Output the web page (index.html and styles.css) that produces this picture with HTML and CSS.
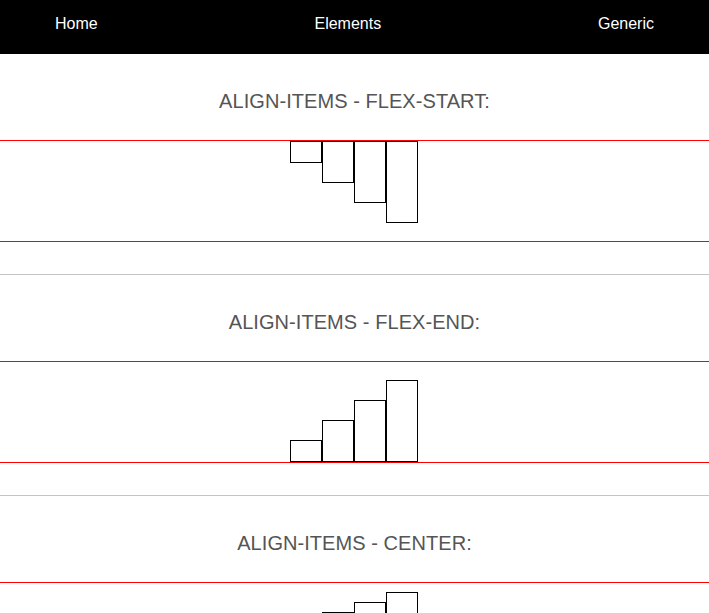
FILE: index.html
```html
<!DOCTYPE html>
<html>
<head>
<meta charset="utf-8">
<link rel="stylesheet" href="styles.css">
</head>
<body>
<nav class="nav">
  <a class="nav-link" href="#">Home</a>
  <a class="nav-link" href="#">Elements</a>
  <a class="nav-link" href="#">Generic</a>
</nav>
<section class="demo">
  <h2 class="demo-title">ALIGN-ITEMS - FLEX-START:</h2>
  <div class="flex flex-start">
    <div class="box h20"></div><div class="box h40"></div><div class="box h60"></div><div class="box h80"></div>
  </div>
</section>
<hr class="sep">
<section class="demo">
  <h2 class="demo-title">ALIGN-ITEMS - FLEX-END:</h2>
  <div class="flex flex-end">
    <div class="box h20"></div><div class="box h40"></div><div class="box h60"></div><div class="box h80"></div>
  </div>
</section>
<hr class="sep">
<section class="demo">
  <h2 class="demo-title">ALIGN-ITEMS - CENTER:</h2>
  <div class="flex flex-center">
    <div class="box h20"></div><div class="box h40"></div><div class="box h60"></div><div class="box h80"></div>
  </div>
</section>
<hr class="sep">
</body>
</html>
```
FILE: styles.css
```css
html, body {
  margin: 0;
  padding: 0;
  background: #fff;
  font-family: "Liberation Sans", Arial, sans-serif;
}
.nav {
  height: 54px;
  box-sizing: border-box;
  background: #000;
  display: flex;
  justify-content: space-between;
  align-items: flex-start;
  padding: 15px 55px 0;
}
.nav-link {
  color: #fff;
  text-decoration: none;
  font-size: 16px;
  line-height: 18px;
}
.demo {
  padding-top: 36px;
}
.demo-title {
  margin: 0 0 27px;
  font-size: 20px;
  line-height: 23px;
  font-weight: normal;
  text-align: center;
  color: #555;
  letter-spacing: 0.06px;
}
.flex {
  display: flex;
  justify-content: center;
  height: 100px;
  padding-right: 1px;
  border-top: 1px solid #f00;
  border-bottom: 1px solid #f00;
}
.flex-start { align-items: flex-start; }
.flex-end { align-items: flex-end; }
.flex-center { align-items: center; }
.box {
  width: 30px;
  border: 1px solid #000;
}
.h20 { height: 20px; }
.h40 { height: 40px; }
.h60 { height: 60px; }
.h80 { height: 80px; }
.sep {
  margin: 32px 0 0;
  border: 0;
  border-top: 1px solid #c4c4c4;
  height: 0;
}
```
